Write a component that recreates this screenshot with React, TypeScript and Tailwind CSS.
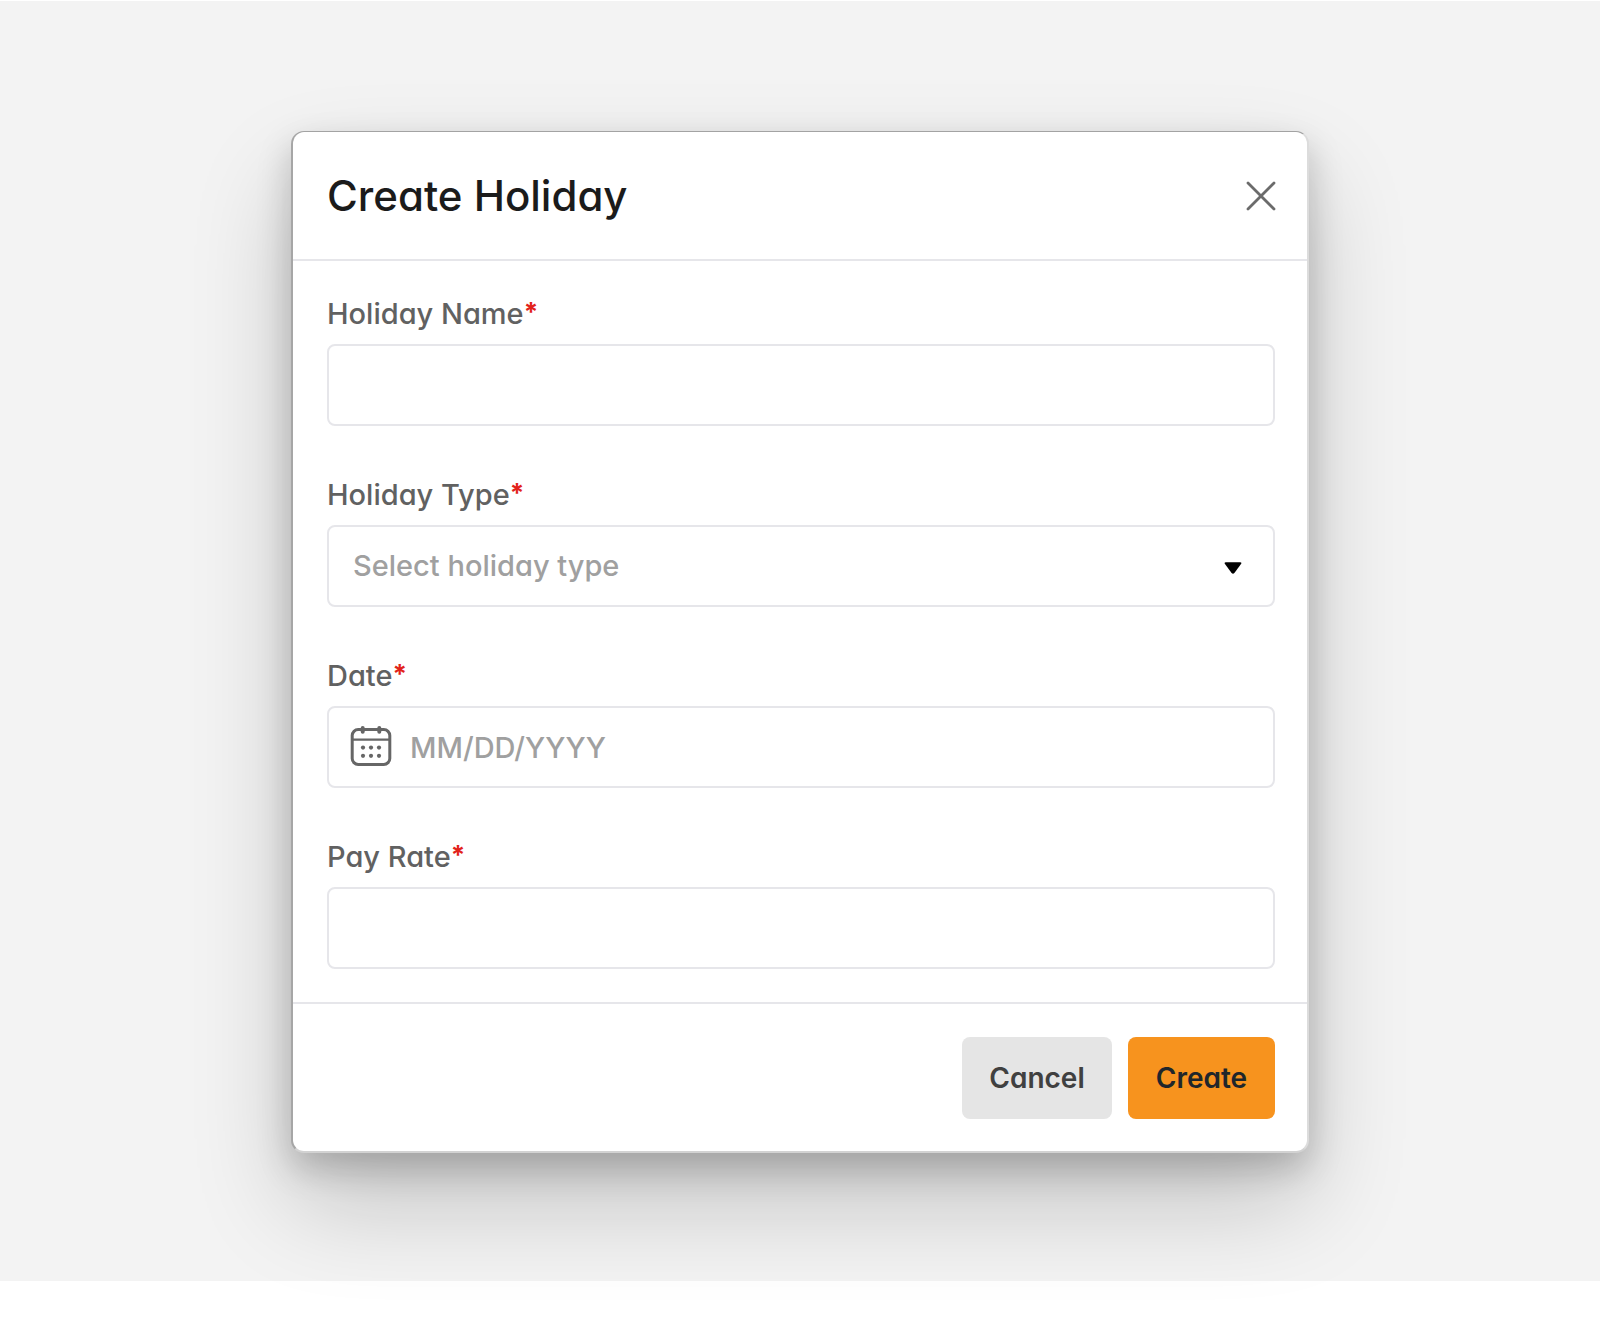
import { useState, type ReactNode } from 'react';

const control =
  'h-[82px] w-full rounded-[8px] border-2 border-[#e6e6ea] bg-white text-[29px] font-medium text-[#404040] outline-none placeholder:text-[#a0a0a0] placeholder:opacity-100 focus:border-[#f7931e]';

function Field({ id, label, children }: { id: string; label: string; children: ReactNode }) {
  return (
    <div className="flex flex-col gap-3">
      <label htmlFor={id} className="flex text-[29px] leading-9 font-medium text-[#616161]">
        {label}
        <span className="text-[26px] leading-8 font-bold text-[#e2231a]">*</span>
      </label>
      {children}
    </div>
  );
}

function CloseIcon() {
  return (
    <svg viewBox="0 0 32 32" className="size-8" fill="none" stroke="#6b6b6b" strokeWidth="2.8" strokeLinecap="round" aria-hidden="true">
      <path d="M3 3 29 29M29 3 3 29" />
    </svg>
  );
}

function CalendarIcon() {
  return (
    <svg viewBox="0 0 42 42" className="h-[42px] w-[42px]" fill="none" stroke="#666" strokeWidth="3" strokeLinecap="round" aria-hidden="true">
      <rect x="2.2" y="3.6" width="37.6" height="34.8" rx="6" />
      <path d="M2.2 13.6H39.8" strokeLinecap="butt" strokeWidth="2.4" />
      <path d="M12.7 2V5.8M29.3 2V5.8" strokeWidth="4" />
      <g fill="#666" stroke="none">
        <circle cx="13" cy="21.6" r="2.1" />
        <circle cx="21" cy="21.6" r="2.1" />
        <circle cx="29" cy="21.6" r="2.1" />
        <circle cx="13" cy="29.8" r="2.1" />
        <circle cx="21" cy="29.8" r="2.1" />
        <circle cx="29" cy="29.8" r="2.1" />
      </g>
    </svg>
  );
}

export default function App() {
  const [type, setType] = useState('');

  return (
    <div className="bg-white pt-px pb-[38px] font-[Inter,'Liberation_Sans',sans-serif] [font-feature-settings:'cv11']">
      <main className="flex justify-center bg-[#f3f3f3] px-6 pt-[130px] pb-[128px]">
        <form
          role="dialog"
          aria-labelledby="dialog-title"
          onSubmit={(e) => e.preventDefault()}
          className="w-full max-w-[1018px] rounded-[13px] border-2 border-t border-t-[#a3a3a3] border-r-[#dcdcdc] border-b-[#d2d2d2] border-l-[#a6a6a6] bg-white bg-clip-padding shadow-[0_50px_100px_rgba(0,0,0,0.2),0_15px_35px_rgba(0,0,0,0.2)]"
        >
          <header className="flex h-[129px] items-center justify-between border-b-2 border-[#e6e6ea] pr-[30px] pl-[34px]">
            <h1 id="dialog-title" className="text-[42px] leading-[48px] font-medium text-[#1b1b1b]">
              Create Holiday
            </h1>
            <button type="button" aria-label="Close">
              <CloseIcon />
            </button>
          </header>

          <div className="flex flex-col gap-[51px] pt-[35px] pr-8 pb-[33px] pl-[34px]">
            <Field id="holiday-name" label="Holiday Name">
              <input id="holiday-name" type="text" className={`${control} px-6`} />
            </Field>

            <Field id="holiday-type" label="Holiday Type">
              <div className="relative">
                <select
                  id="holiday-type"
                  value={type}
                  onChange={(e) => setType(e.target.value)}
                  className={`${control} appearance-none px-6 ${type ? '' : 'text-[#a0a0a0]!'}`}
                >
                  <option value="">Select holiday type</option>
                  <option value="public">Public</option>
                  <option value="company">Company</option>
                </select>
                <svg viewBox="0 0 18 14" className="pointer-events-none absolute top-9 right-[33px] h-[14px] w-[18px]" aria-hidden="true">
                  <path d="M1.6 1.2H16.4Q18 1.4 17.2 2.8L10.4 12Q9 13.6 7.6 12L.8 2.8Q0 1.4 1.6 1.2Z" fill="#000" />
                </svg>
              </div>
            </Field>

            <Field id="holiday-date" label="Date">
              <div className="relative">
                <input id="holiday-date" type="text" placeholder="MM/DD/YYYY" className={`${control} pr-6 pl-[81px]`} />
                <span className="pointer-events-none absolute inset-y-0 left-[23px] flex items-center">
                  <CalendarIcon />
                </span>
              </div>
            </Field>

            <Field id="pay-rate" label="Pay Rate">
              <input id="pay-rate" type="text" className={`${control} px-6`} />
            </Field>
          </div>

          <footer className="flex justify-end gap-4 border-t-2 border-[#e6e6ea] pt-[33px] pr-8 pb-8 pl-[34px]">
            <button type="button" className="h-[82px] w-[150px] rounded-[8px] bg-[#e5e5e5] text-[28px] font-semibold text-[#404040]">
              Cancel
            </button>
            <button type="submit" className="h-[82px] w-[147px] rounded-[8px] bg-[#f7931e] text-[28px] font-semibold text-[#20262b]">
              Create
            </button>
          </footer>
        </form>
      </main>
    </div>
  );
}
